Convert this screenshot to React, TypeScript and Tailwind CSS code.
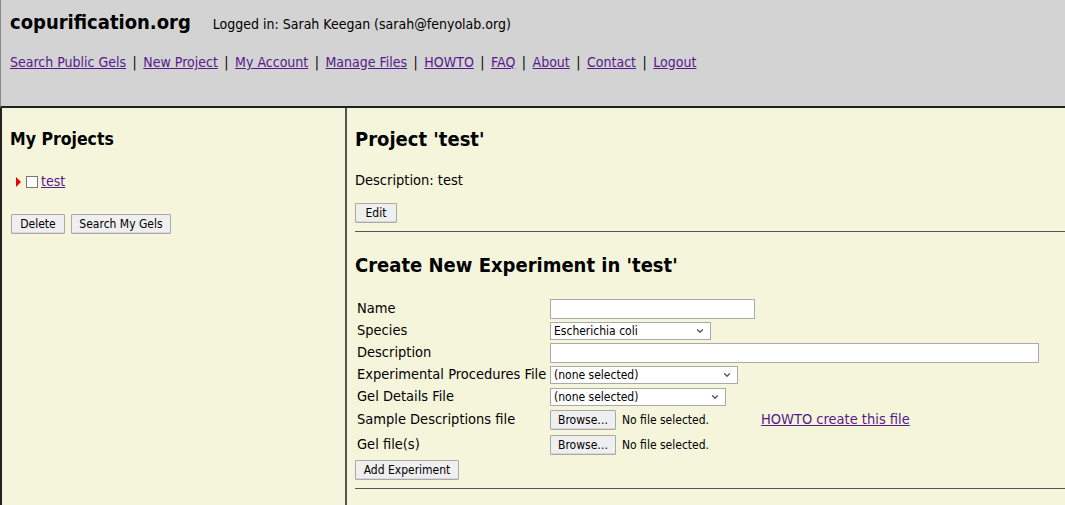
import { ChevronDown } from 'lucide-react';

const navLinks = [
  'Search Public Gels',
  'New Project',
  'My Account',
  'Manage Files',
  'HOWTO',
  'FAQ',
  'About',
  'Contact',
  'Logout',
];

function Button({ label, className = '' }: { label: string; className?: string }) {
  return (
    <button
      className={`h-[20px] px-[7px] text-[12px] leading-none bg-[#efefef] border border-[#a9a9a9] rounded-[1px] shadow-[inset_0_-1px_0_#d8d8d8] ${className}`}
    >
      {label}
    </button>
  );
}

function Select({ value, width }: { value: string; width: string }) {
  return (
    <div
      className={`${width} h-[18px] flex items-center justify-between bg-white border border-[#a9a9a9] pl-[3px] pr-[5px] text-[12px]`}
    >
      <span>{value}</span>
      <ChevronDown className="w-[10px] h-[10px] text-[#555]" strokeWidth={3} />
    </div>
  );
}

function FileInput() {
  return (
    <div className="flex items-center gap-[6px] w-[211px]">
      <Button label="Browse…" className="w-[66px] px-0" />
      <span className="text-[12px]">No file selected.</span>
    </div>
  );
}

function Row({ label, children, h = 'h-[22px]' }: { label: string; children: React.ReactNode; h?: string }) {
  return (
    <div className={`flex items-center ${h}`}>
      <div className="w-[193px] shrink-0 text-[14.5px]">{label}</div>
      <div className="flex items-center">{children}</div>
    </div>
  );
}

export default function App() {
  return (
    <div
      className="min-h-screen bg-[#f5f5dc] text-black"
      style={{ fontFamily: 'Tahoma, "DejaVu Sans Condensed", "DejaVu Sans", sans-serif' }}
    >
      {/* Header */}
      <div className="h-[108px] bg-[#d3d3d3] border-b-2 border-[#222] border-l border-l-[#888] px-[9px] pt-[7px]">
        <div className="flex items-baseline gap-[22px]">
          <span className="text-[20px] font-bold">copurification.org</span>
          <span className="text-[14px]">Logged in: Sarah Keegan (sarah@fenyolab.org)</span>
        </div>
        <div className="mt-[15px] text-[14px]">
          {navLinks.map((l, i) => (
            <span key={l}>
              {i > 0 && <span className="mx-[6.5px]">|</span>}
              <a href="#" className="text-[#551a8b] underline">
                {l}
              </a>
            </span>
          ))}
        </div>
      </div>

      <div className="flex min-h-[397px]">
        {/* Left panel */}
        <div className="w-[347px] shrink-0 border-l-2 border-r-2 border-l-[#222] border-r-[#555] pl-[8px] pt-[18px]">
          <h2 className="text-[17.5px] font-bold">My Projects</h2>
          <div className="mt-[19px] flex items-center pl-[6px]">
            <span className="w-0 h-0 border-y-[5px] border-y-transparent border-l-[5px] border-l-[#e00] mr-[5px]" />
            <span className="w-[12px] h-[12px] border border-[#777] bg-white mr-[3px]" />
            <a href="#" className="text-[14px] text-[#551a8b] underline">
              test
            </a>
          </div>
          <div className="mt-[22px] flex gap-[6px] pl-[1px]">
            <Button label="Delete" className="w-[54px]" />
            <Button label="Search My Gels" className="w-[100px]" />
          </div>
        </div>

        {/* Main panel */}
        <div className="flex-1 pl-[8px] pt-[16px]">
          <h2 className="text-[20px] font-bold">Project 'test'</h2>
          <p className="mt-[16px] text-[14.5px]">Description: test</p>
          <Button label="Edit" className="mt-[11px] w-[42px]" />
          <hr className="mt-[7px] border-t border-[#555]" />

          <h2 className="mt-[18px] text-[20px] font-bold">Create New Experiment in 'test'</h2>
          <div className="mt-[18px] pl-[2px]">
            <Row label="Name">
              <div className="w-[205px] h-[20px] bg-white border border-[#a9a9a9]" />
            </Row>
            <Row label="Species">
              <Select value="Escherichia coli" width="w-[161px]" />
            </Row>
            <Row label="Description">
              <div className="w-[489px] h-[20px] bg-white border border-[#a9a9a9]" />
            </Row>
            <Row label="Experimental Procedures File">
              <Select value="(none selected)" width="w-[188px]" />
            </Row>
            <Row label="Gel Details File">
              <Select value="(none selected)" width="w-[176px]" />
            </Row>
            <div className="flex items-center h-[25px]">
              <div className="w-[193px] shrink-0 text-[14.5px]">Sample Descriptions file</div>
              <FileInput />
              <a href="#" className="text-[14.5px] text-[#551a8b] underline">
                HOWTO create this file
              </a>
            </div>
            <Row label="Gel file(s)" h="h-[24px]">
              <FileInput />
            </Row>
          </div>
          <Button label="Add Experiment" className="mt-[0px] w-[104px]" />
          <hr className="mt-[7px] border-t border-[#555]" />
        </div>
      </div>
    </div>
  );
}
